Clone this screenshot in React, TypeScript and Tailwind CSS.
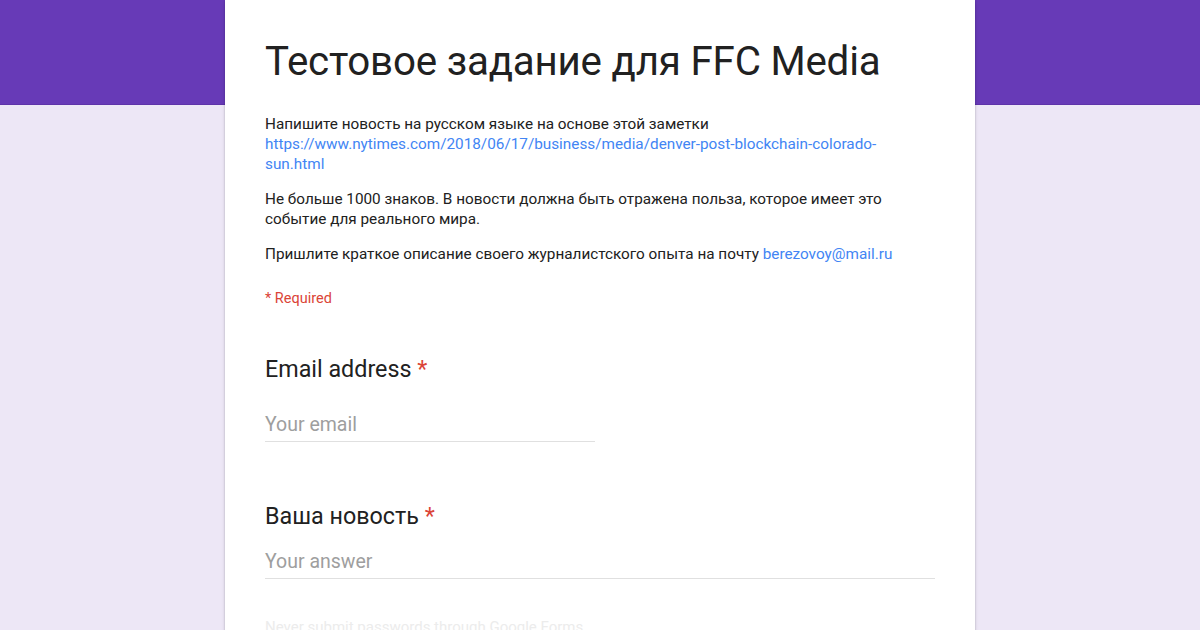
export default function App() {
  return (
    <div className="relative h-[630px] w-[1200px] overflow-hidden bg-[#ede7f6] font-['Roboto',sans-serif]">
      {/* purple header band */}
      <div className="h-[105px] w-full border-b border-[#5e33a9] bg-[#673ab7]" />

      <div className="absolute left-[225px] top-0 w-[750px]">
        <div className="min-h-[700px] bg-white px-10 pt-[38px] shadow-[0_0_2px_rgba(0,0,0,0.2),0_2px_4px_rgba(0,0,0,0.1)]">
          <h1 className="text-[40.3px] leading-[48px] tracking-[-0.2px] text-[#212121]">
            Тестовое задание для FFC Media
          </h1>

          <div className="mt-[28px] text-[15.3px] leading-5 text-[#212121]">
            <p>
              Напишите новость на русском языке на основе этой заметки{" "}
              <a className="text-[#4285f4]" href="#">
                https://www.nytimes.com/2018/06/17/business/media/denver-post-blockchain-colorado-sun.html
              </a>
            </p>
            <p className="mt-[15px]">
              Не больше 1000 знаков. В новости должна быть отражена польза, которое имеет это событие для
              реального мира.
            </p>
            <p className="mt-[15px]">
              Пришлите краткое описание своего журналистского опыта на почту{" "}
              <a className="text-[#4285f4]" href="#">
                berezovoy@mail.ru
              </a>
            </p>
          </div>

          <div className="mt-[25px] text-[14.5px] leading-5 text-[#db4437]">* Required</div>

          {/* email */}
          <div className="mt-[46px]">
            <div className="text-[23.3px] leading-7 text-[#212121]">
              Email address <span className="text-[#db4437]">*</span>
            </div>
            <div className="mt-[30px] w-[330px] border-b border-[#e0e0e0] pb-[4px] text-[19.5px] leading-6 text-[#9e9e9e]">
              Your email
            </div>
          </div>

          {/* news */}
          <div className="mt-[60px]">
            <div className="text-[23.3px] leading-7 text-[#212121]">
              Ваша новость <span className="text-[#db4437]">*</span>
            </div>
            <div className="mt-[20px] border-b border-[#e0e0e0] pb-[4px] text-[19.5px] leading-6 text-[#9e9e9e]">
              Your answer
            </div>
          </div>

          <div className="mt-[38px] text-[15px] leading-5 text-[#ececec]">
            Never submit passwords through Google Forms.
          </div>
        </div>
      </div>
    </div>
  );
}
